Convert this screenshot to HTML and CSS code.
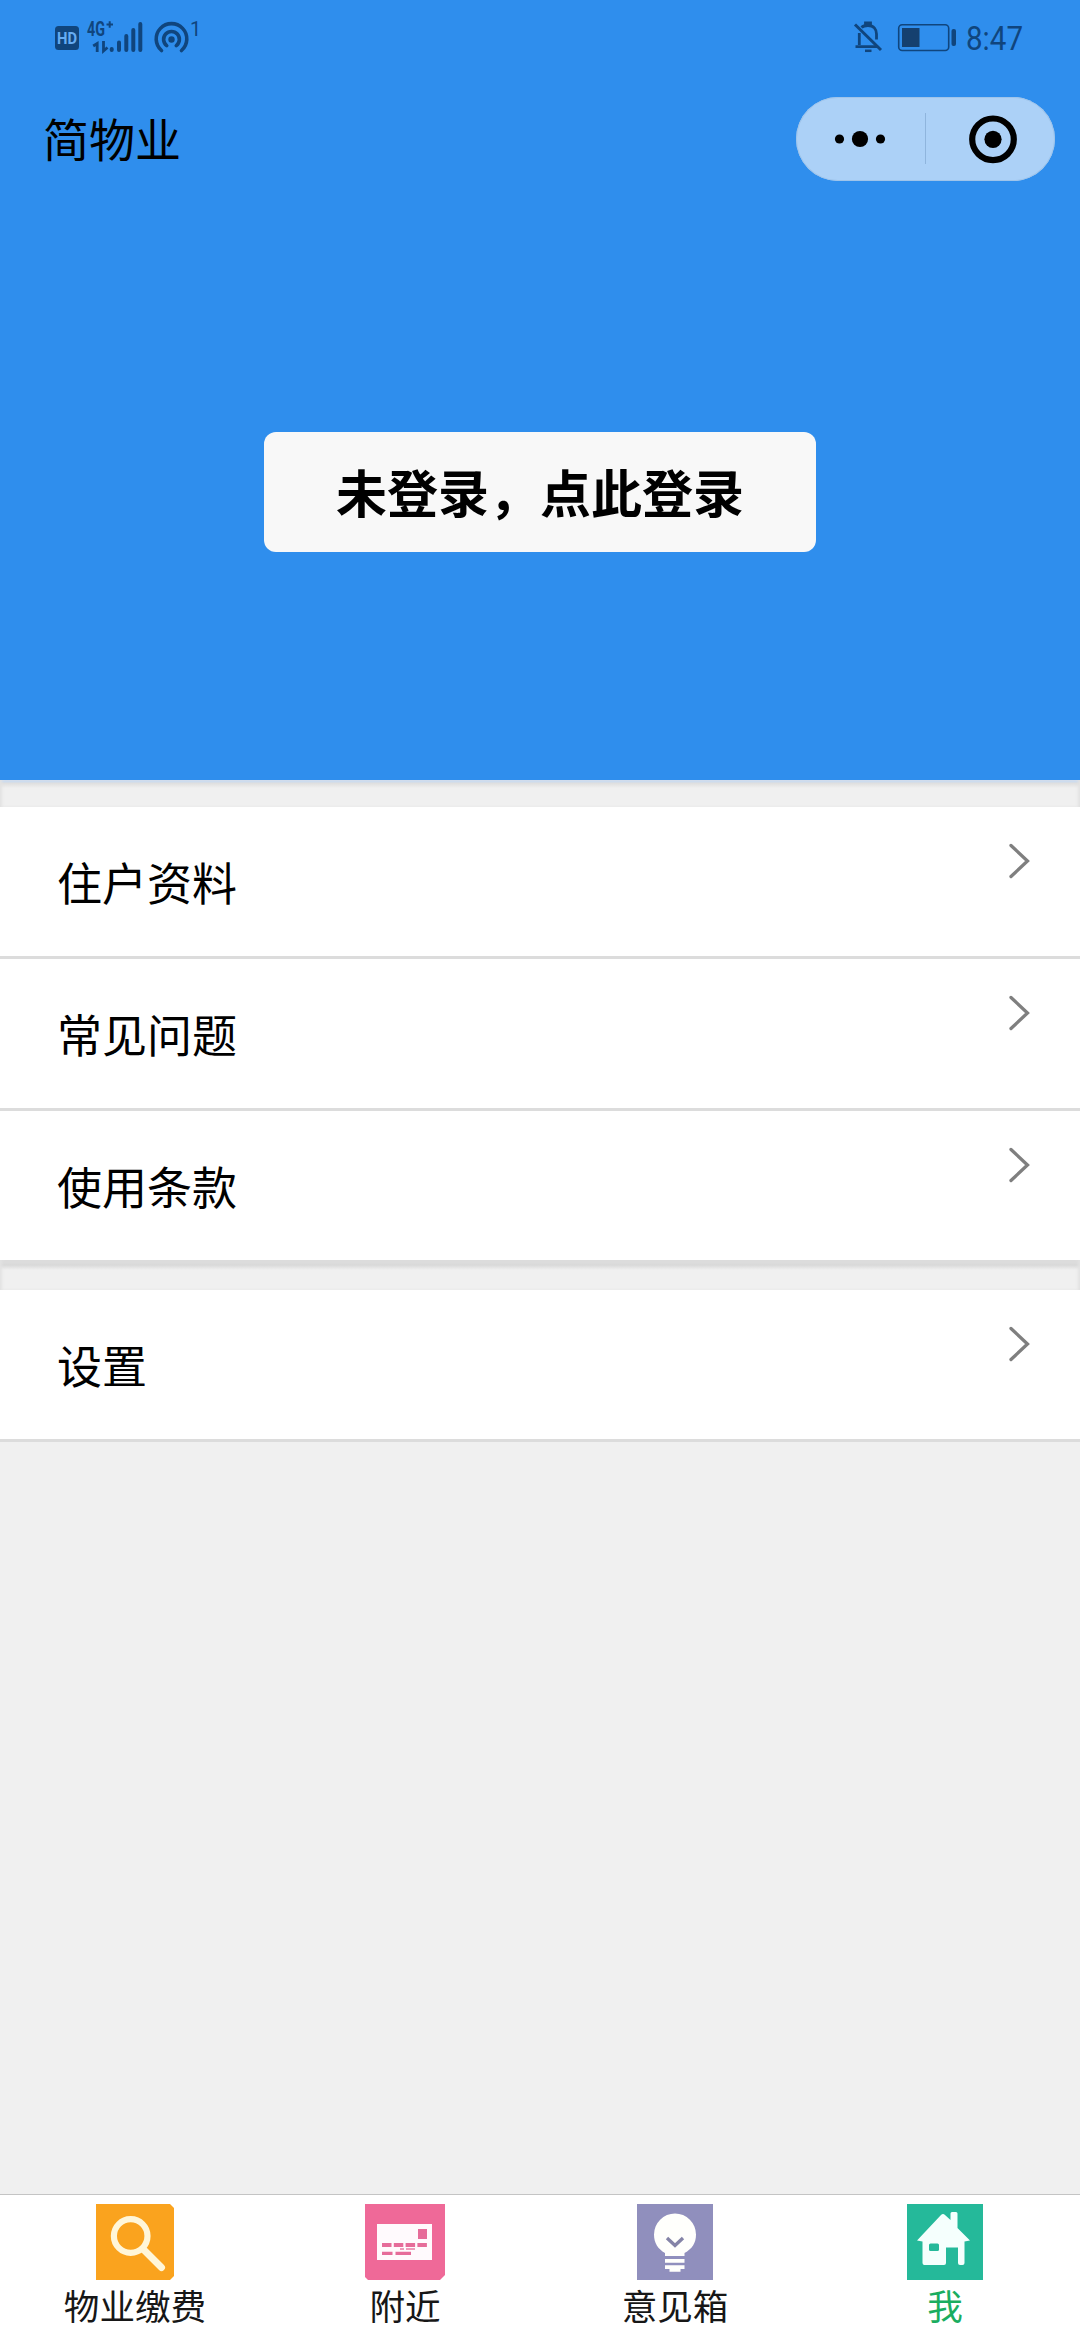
FILE: index.html
```html
<!DOCTYPE html>
<html lang="zh-CN">
<head>
<meta charset="utf-8">
<title>简物业</title>
<link rel="stylesheet" href="styles.css">
</head>
<body>
<div class="app">
  <header class="hero">
    <div class="status">
      <svg class="status-left" width="150" height="50" viewBox="50 11 150 50">
        <rect x="55" y="26" width="24" height="24" rx="3.5" fill="#10457d"/>
        <text class="hd" x="57" y="43.8" textLength="20" lengthAdjust="spacingAndGlyphs">HD</text>
        <text class="net" x="87" y="36" textLength="18" lengthAdjust="spacingAndGlyphs">4G</text>
        <path d="M106.500 24.500h6.500M109.700 21.300v6.500" stroke="#10457d" stroke-width="2"/>
        <path d="M97.200 52V43.500l-4 2.500M103.500 41v10l4-3.500" fill="none" stroke="#10457d" stroke-width="2.800"/>
        <g stroke="#10457d" stroke-width="4" stroke-linecap="round">
          <path d="M111.700 49v1M119 42.500v7.500M126.300 36v14M133.300 30v20M140.300 24v26"/>
        </g>
        <circle cx="171.500" cy="39.500" r="3.200" fill="#10457d"/>
        <g fill="none" stroke="#10457d" stroke-width="3.600" stroke-linecap="round">
          <path d="M166.700 45.600a7.900 7.900 0 1 1 9.600 0"/>
          <path d="M161.500 50.500a15.300 15.300 0 1 1 20 0"/>
        </g>
        <text class="one" x="190" y="36">1</text>
      </svg>
      <svg class="status-right" width="190" height="50" viewBox="850 11 190 50">
        <g fill="none" stroke="#10457d" stroke-width="2.800">
          <path d="M855 24.500l26 25.500" stroke-width="3"/>
          <path d="M855.500 46.700h21.500M859.300 45v-12M861.500 27.500c1.500-1.500 3-2 6.500-2 6 0 8.500 4 8.500 8.500v5.500M865.500 25v-2h5v2"/>
          <path d="M865 50.800h6.500" stroke-width="2.500"/>
        </g>
        <rect x="898.700" y="24.700" width="50" height="25.800" rx="3.500" fill="none" stroke="#10457d" stroke-width="1.600"/>
        <rect x="902" y="28" width="17.500" height="19" fill="#15406f"/>
        <rect x="951.500" y="29" width="4.500" height="17" rx="2" fill="#10457d"/>
        <text class="clock" x="966" y="50" textLength="57" lengthAdjust="spacingAndGlyphs">8:47</text>
      </svg>
    </div>
    <div class="nav">
      <h1 class="title">简物业</h1>
      <div class="capsule">
        <svg width="259" height="84" viewBox="796 97 259 84">
          <circle cx="839.500" cy="139" r="4.600"/><circle cx="860" cy="139" r="8.100"/><circle cx="880.500" cy="139" r="4.600"/>
          <path d="M925.500 113v51" stroke="#8fb5dd" stroke-width="1"/>
          <circle cx="993" cy="139.300" r="20.800" fill="none" stroke="#000" stroke-width="6.200"/>
          <circle cx="993" cy="139.300" r="8.600"/>
        </svg>
      </div>
    </div>
    <button class="login">未登录，点此登录</button>
  </header>

  <div class="gap gap-first"></div>
  <div class="row"><span>住户资料</span><svg class="arrow" width="22" height="36" viewBox="0 0 22 36"><path d="M3 2.500L19.500 18 3 33.500"/></svg></div>
  <div class="row"><span>常见问题</span><svg class="arrow" width="22" height="36" viewBox="0 0 22 36"><path d="M3 2.500L19.500 18 3 33.500"/></svg></div>
  <div class="row row-last"><span>使用条款</span><svg class="arrow" width="22" height="36" viewBox="0 0 22 36"><path d="M3 2.500L19.500 18 3 33.500"/></svg></div>
  <div class="gap gap-second"></div>
  <div class="row"><span>设置</span><svg class="arrow" width="22" height="36" viewBox="0 0 22 36"><path d="M3 2.500L19.500 18 3 33.500"/></svg></div>

  <nav class="tabs">
    <div class="tab">
      <svg width="78" height="76" viewBox="0 0 78 76">
        <path d="M0 0h74l4 4v68l-4 4H0z" fill="#faa31e"/>
        <circle cx="34.700" cy="32" r="16.800" fill="none" stroke="#fff6d9" stroke-width="6.200"/>
        <path d="M47.500 45.500L65.500 63.500" stroke="#fff6d9" stroke-width="7" stroke-linecap="round"/>
      </svg>
      <span>物业缴费</span>
    </div>
    <div class="tab">
      <svg width="80" height="76" viewBox="0 0 80 76">
        <path d="M0 0h80v71l-5 5H3l-3-3z" fill="#ef6998"/>
        <path d="M12 20h55v36H12z" fill="#fffafd"/>
        <path d="M53 25h9v10h-9z" fill="#e66c9a"/>
        <path d="M17 41h45" stroke="#e66c9a" stroke-width="4" stroke-dasharray="9.500 2.300"/>
        <path d="M17 49.300h10.500M30.500 49.300H46" stroke="#e66c9a" stroke-width="3.200"/>
        <path d="M35 45h4M41 45h9" stroke="#ee9bbb" stroke-width="2"/>
      </svg>
      <span>附近</span>
    </div>
    <div class="tab">
      <svg width="76" height="76" viewBox="0 0 76 76">
        <path d="M0 0h76v76H0z" fill="#908fbd"/>
        <path d="M28 52v-3C21 45 17 39 17 30.500a21 21 0 0 1 42 0C59 39 55 45 47.500 49v3zM28 55h19.500v3.700H28zM28 61.300h19.500v3.700h-4v2.800H32.500V65H28z" fill="#fffffc"/>
        <path d="M30 34l8 7.500 8-7.500" fill="none" stroke="#8584a7" stroke-width="3.400"/>
      </svg>
      <span>意见箱</span>
    </div>
    <div class="tab tab-active">
      <svg width="76" height="76" viewBox="0 0 76 76">
        <path d="M0 0h76v76H0z" fill="#25b99a"/>
        <path d="M10 36.500L34 11q2-2 4 0l5.500 5V9.500Q43.500 8 45 8h4q1.500 0 1.500 1.500V24L63 36.500l-5.500 1V59q0 2-2 2h-2.500q-2 0-2-2V43.500H39V59q0 2-2 2H17.500q-2 0-2-2V37.500z" fill="#f5fffd"/>
        <rect x="22" y="39.500" width="10" height="7.500" rx="1.500" fill="#25b99a"/>
      </svg>
      <span>我</span>
    </div>
  </nav>
</div>
</body>
</html>
```
FILE: styles.css
```css
* { box-sizing: border-box; }
body {
  margin: 0;
  background: #f0f0f0;
  color: #000;
  font-family: "Noto Sans CJK SC", sans-serif;
}
.app {
  width: 1080px;
  height: 2340px;
  display: flex;
  flex-direction: column;
}
svg { display: block; }
.hero {
  height: 780px;
  background: #2f8eed;
  display: flex;
  flex-direction: column;
  flex-shrink: 0;
}
.status {
  height: 97px;
  padding: 11px 40px 0 50px;
  display: flex;
  justify-content: space-between;
}
.hd { font: bold 17px Roboto, sans-serif; fill: #66acf2; }
.net { font: bold 20px Roboto, sans-serif; fill: #10457d; }
.one { font: 20px Roboto, sans-serif; fill: #10457d; }
.clock { font: 34px Roboto, sans-serif; fill: #10457d; }
.nav {
  height: 84px;
  padding: 0 25px 0 43px;
  display: flex;
  justify-content: space-between;
  align-items: center;
}
.title {
  margin: 0 0 4px;
  font-size: 46px;
  font-weight: 400;
  line-height: 66px;
}
.capsule {
  width: 259px;
  height: 84px;
  border-radius: 42px;
  background: #acd1f7;
  box-shadow: inset 0 0 0 1px #9fc4ea;
}
.login {
  width: 552px;
  height: 120px;
  margin: 251px auto 0;
  padding: 0 0 2px;
  border: 0;
  border-radius: 12px;
  background: #f8f8f8;
  color: #000;
  font: bold 51px/118px "Noto Sans CJK SC", sans-serif;
}
.gap { flex-shrink: 0; }
.gap-first {
  height: 27px;
  background: linear-gradient(#cddcf0 0 2px, #dedede 3px, #f0f0f0 8px);
  box-shadow: inset 3px 0 3px -1px #e2e2e2, inset -3px 0 3px -1px #e2e2e2;
}
.gap-second {
  height: 30px;
  background: linear-gradient(#dcdcdc 0 3px, #d9d9d9 5px, #f0f0f0 10px);
  box-shadow: inset 3px 0 3px -1px #e2e2e2, inset -3px 0 3px -1px #e2e2e2;
}
.row {
  height: 152px;
  padding: 0 50px 0 57px;
  border-bottom: 3px solid #dcdcdc;
  background: #fff;
  display: flex;
  justify-content: space-between;
  flex-shrink: 0;
  font-size: 45px;
  line-height: 150px;
}
.row-last { height: 149px; border-bottom: 0; }
.arrow { margin-top: 36px; }
.arrow path { fill: none; stroke: #7f7f7f; stroke-width: 3.3; stroke-linecap: round; }
.tabs {
  height: 146px;
  margin-top: auto;
  padding-top: 9px;
  border-top: 1px solid #c4c4c4;
  background: #fff;
  display: flex;
}
.tab {
  flex: 1;
  display: flex;
  flex-direction: column;
  align-items: center;
  color: #171717;
  font-size: 35.6px;
  line-height: 50px;
}
.tab-active { color: #1aad60; }
```
